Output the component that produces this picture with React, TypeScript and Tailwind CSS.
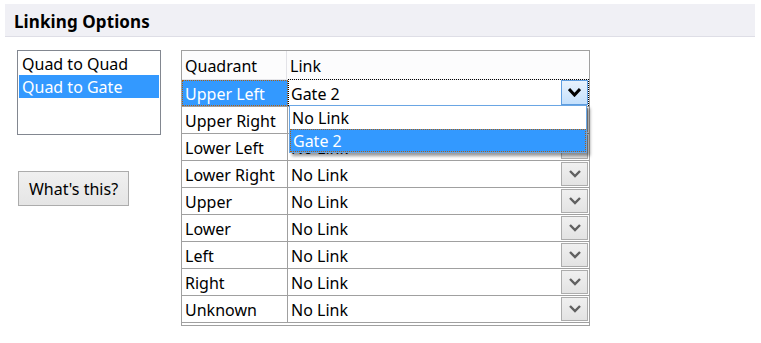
import React from "react";

const rows = [
  "Upper Left",
  "Upper Right",
  "Lower Left",
  "Lower Right",
  "Upper",
  "Lower",
  "Left",
  "Right",
  "Unknown",
];

function Chevron({ color, w = 10, h = 6, sw = 2.4 }: { color: string; w?: number; h?: number; sw?: number }) {
  return (
    <svg width={w + 2} height={h + 2} viewBox={`0 0 ${w + 2} ${h + 2}`}>
      <path d={`M1 1 L${(w + 2) / 2} ${h} L${w + 1} 1`} fill="none" stroke={color} strokeWidth={sw} />
    </svg>
  );
}

function GrayButton() {
  return (
    <div className="w-[27px] h-[24px] border border-[#acacac] bg-gradient-to-b from-[#f0f0f0] to-[#e3e3e3] flex items-center justify-center">
      <Chevron color="#606060" />
    </div>
  );
}

export default function App() {
  const font = { fontFamily: '"Noto Sans", "Segoe UI", sans-serif' };
  return (
    <div className="relative w-[761px] h-[343px] bg-white text-black text-[16px] overflow-hidden" style={font}>
      <div className="ml-[5px] mr-[6px] mt-[4px] h-[33px] bg-[#f0f0f5] border-b border-[#dedee6] flex items-center pl-[9px] pt-[2px]">
        <span className="font-bold text-[17px] leading-none tracking-[0.1px]">Linking Options</span>
      </div>
      <div className="flex mt-[13px]">
        <div className="ml-[17px] flex flex-col">
          <div className="w-[144px] h-[85px] border border-[#828790] bg-white p-[1px]">
            <div className="pl-[3px] h-[23px] leading-[23px] pt-[1px]">Quad to Quad</div>
            <div className="pl-[3px] h-[23px] leading-[23px] pt-[1px] bg-[#3399ff] text-white">Quad to Gate</div>
          </div>
          <button className="mt-[36px] ml-[1px] w-[111px] h-[35px] border border-[#acacac] bg-gradient-to-b from-[#f0f0f0] to-[#e5e5e5] text-[16px] text-black pt-[1px]">
            What's this?
          </button>
        </div>
        <div className="ml-[20px] w-[409px] h-[276px] border border-[#a0a0a0] bg-white flex flex-col">
          <div className="flex h-[29px] border-b border-[#e6e6ea] bg-[#fcfcfd]">
            <div className="w-[105px] pl-[3px] pt-[2px] flex items-center border-r border-[#e3e3e8]">Quadrant</div>
            <div className="flex-1 pl-[3px] pt-[2px] flex items-center">Link</div>
          </div>
          {rows.map((r, i) => {
            const first = i === 0;
            const hidden = i === 1;
            return (
              <div key={r} className="flex h-[27px] border-b border-[#a0a0a0]">
                <div
                  className={
                    first
                      ? "w-[106px] pl-[2px] pt-[2px] flex items-center border border-dotted border-[#b06010] bg-[#3399ff] text-white"
                      : "w-[106px] pl-[3px] pt-[2px] flex items-center border-r border-[#a0a0a0]"
                  }
                >
                  {r}
                </div>
                {first ? (
                  <div className="flex-1 -mt-[1px] h-[27px] pl-[2px] flex items-center justify-between border border-dotted border-black">
                    <span className="pt-[2px]">Gate 2</span>
                    <div className="w-[27px] h-[25px] border border-[#5f9ee0] bg-gradient-to-b from-[#e8f2fc] to-[#c4e0fc] flex items-center justify-center">
                      <Chevron color="#000" w={11} h={7} sw={3} />
                    </div>
                  </div>
                ) : (
                  <div className="flex-1 pl-[3px] pr-[1px] flex items-center justify-between">
                    <span className="pt-[2px]">{hidden ? "" : "No Link"}</span>
                    <GrayButton />
                  </div>
                )}
              </div>
            );
          })}
        </div>
      </div>
      <div className="absolute left-[289px] top-[105px] w-[298px] h-[48px] border border-[#6aa6e4] bg-white shadow-[3px_3px_3px_rgba(0,0,0,0.4)] flex flex-col">
        <div className="h-[23px] pl-[2px] flex items-center">No Link</div>
        <div className="h-[23px] pl-[2px] flex items-center bg-[#3399ff] text-white border border-dotted border-[#b06010]">Gate 2</div>
      </div>
    </div>
  );
}
